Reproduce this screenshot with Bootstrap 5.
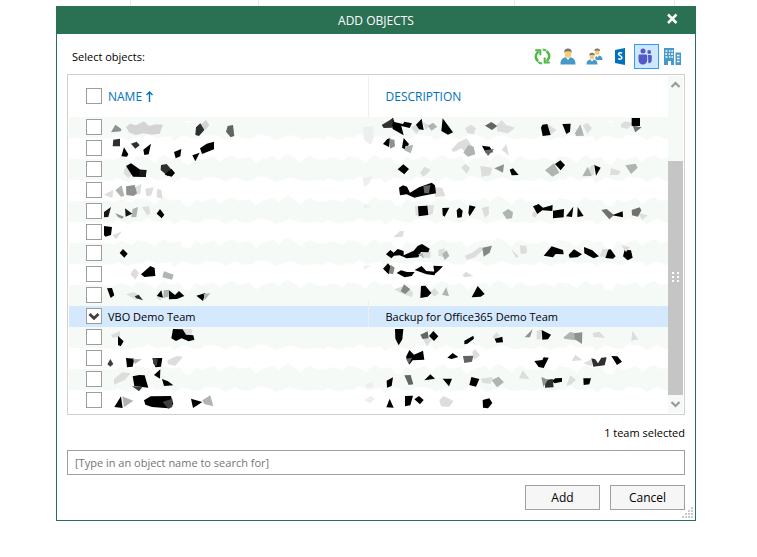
<!DOCTYPE html>
<html lang="en">
<head>
<meta charset="utf-8">
<meta name="viewport" content="width=device-width, initial-scale=1">
<title>Add Objects</title>
<link href="https://cdn.jsdelivr.net/npm/bootstrap@5.3.0/dist/css/bootstrap.min.css" rel="stylesheet">
<style>
  body { font: 11px/16px "Open Sans", "Noto Sans", sans-serif; color: #000; background: #fff; overflow-x: hidden; }
  .backdrop-grid { height: 6px; }
  .backdrop-grid span { border-right: 1px solid #eaeaea; }
  .g1 { width: 131px; } .g2 { width: 128px; } .g3 { width: 256px; } .g4 { width: 160px; }
  .dialog { margin: 0 61px 0 56px; border: 1px solid #2a7154; background: #fff; }
  .dialog-title { height: 27px; background: #2a7154; color: #fff; }
  .dialog-title h1 { font-size: 12px; line-height: 16px; font-weight: 400; }
  .close-btn { right: 17px; top: 6px; width: 12px; height: 12px; }
  .dialog-main { padding: 10px; }
  .prompt { padding-left: 5px; }
  .tools { gap: 1px; }
  .tool { width: 25px; height: 25px; border: 1px solid transparent; border-radius: 0; }
  .tool.active { background: #cce8fa; border-color: #3399ff; }
  .object-list { height: 341px; margin-top: 5px; border: 1px solid #d0d0d0; padding: 1px; }
  .objects { table-layout: fixed; border-collapse: collapse; }
  .objects th, .objects td { padding: 0 0 0 4px; font-weight: 400; vertical-align: middle; white-space: nowrap; }
  .objects th { height: 41px; font-size: 12px; color: #0072bc; }
  .objects td { height: 21px; padding-top: 3px; vertical-align: top; }
  .objects th:first-child, .objects td:first-child { width: 35px; padding-left: 17px; }
  .objects td:first-child { padding-top: 2px; }
  .objects th:first-child { padding-top: 12px; vertical-align: top; }
  .objects .col-name { width: 264px; }
  .objects .col-desc { padding-left: 17px; border-left: 1px solid #eeeeee; }
  .objects td.col-desc { border-left-color: transparent; }
  .objects tbody tr:nth-child(odd) { background: #f5faf7; }
  .objects tbody tr.picked { background: #d5e9fe; }
  .objects tr.picked td.col-desc { border-left-color: #eeeeee; }
  .tick { appearance: none; display: block; width: 16px; height: 16px; margin: 0; border: 1px solid #9d9d9d; background: #fff; }
  .tick:checked { background: #fff url("data:image/svg+xml,%3Csvg xmlns='http://www.w3.org/2000/svg' viewBox='0 0 14 14'%3E%3Cpath d='M2.500 5 7 9.300 11.500 5' fill='none' stroke='%23404040' stroke-width='2.800'/%3E%3C/svg%3E") center / 14px 14px no-repeat; }
  .smears { left: 0; top: 0; pointer-events: none; }
  .scroller { width: 15px; background: #f5faf7; }
  .scroller button { height: 17px; }
  .scroller button:last-child { height: 18px; }
  .track-top { height: 68px; }
  .thumb { background: #c5c5c5; }
  .count { margin-top: 10px; }
  .search { height: 25px; margin-top: 9px; padding: 0 7px; border: 1px solid #a0a0a0; border-radius: 0; font-size: 11px; line-height: 16px; color: #000; }
  .search::placeholder { color: #757575; opacity: 1; }
  .actions { margin-top: 10px; gap: 10px; }
  .action { width: 75px; height: 25px; padding: 0; border: 1px solid #a0a0a0; border-radius: 0; background: #f6f6f6; font-size: 12px; line-height: 16px; color: #000; }
  .grip { right: 2px; bottom: 2px; }
</style>
<script src="https://cdn.jsdelivr.net/npm/bootstrap@5.3.0/dist/js/bootstrap.bundle.min.js"></script>
</head>
<body>
<div class="backdrop-grid d-flex" aria-hidden="true"><span class="g1"></span><span class="g2"></span><span class="g3"></span><span class="g4"></span></div>
<main class="dialog position-relative">
  <header class="dialog-title position-relative d-flex align-items-center justify-content-center">
    <h1 class="m-0">ADD OBJECTS</h1>
    <button type="button" class="close-btn btn p-0 border-0 position-absolute d-flex" aria-label="Close">
      <svg width="12" height="12" viewBox="0 0 12 12"><path d="M2 1.500 10.500 10M10.500 1.500 2 10" stroke="#fff" stroke-width="2.500"/></svg>
    </button>
  </header>
  <div class="dialog-main">
    <div class="d-flex align-items-center justify-content-between">
      <span class="prompt">Select objects:</span>
      <div class="tools d-flex">
        <button type="button" class="tool btn p-0 d-flex align-items-center justify-content-center" aria-label="Refresh">
          <svg width="17" height="17" viewBox="0 0 17 17" fill="none" stroke="#52b848" stroke-width="2.500"><path d="M4.200 13.200C.8 10.500 1 6 4.600 3.400M12.500 3.300c3.700 2.800 3.500 7.200.2 10"/><path d="M8.200 15.400c-1.600 0-2.900-.6-4-1.500M8.700 1.400c1.300 0 2.500.5 3.500 1.300" stroke-width="2"/><path d="M1.200 2.200h5.100v5M15.800 14.600h-5.100v-5" stroke-width="2"/></svg>
        </button>
        <button type="button" class="tool btn p-0 d-flex align-items-center justify-content-center" aria-label="Users">
          <svg width="17" height="17" viewBox="0 0 17 17"><path d="M.5 16.500c0-5 2-6.500 5.200-7.200L8 12l2.300-2.700c3.200.7 5.200 2.200 5.200 7.200z" fill="#4799c9"/><ellipse cx="8" cy="5.200" rx="3.300" ry="4.500" fill="#f5cc78"/><path d="M4.200 4.400C4.200 1.500 6 .5 8 .5s3.800 1 3.800 3.900C9.500 3 6.500 3 4.200 4.400z" fill="#7d7568"/></svg>
        </button>
        <button type="button" class="tool btn p-0 d-flex align-items-center justify-content-center" aria-label="Groups">
          <svg width="17" height="17" viewBox="0 0 17 17"><path d="M9 9.500 10.500 8l1 1.500L13 7.500c2.200.4 3.500 1.500 3.500 4.500H10z" fill="#4799c9"/><ellipse cx="11.200" cy="3.800" rx="2.300" ry="3.200" fill="#f5cc78"/><path d="M8.500 3C8.500 1 9.700.4 11.200.4S14 1 14 3c-1.800-.8-3.700-.8-5.500 0z" fill="#7d7568"/><path d="M.5 16.500c0-3.500 1.300-4.700 3.700-5.100L6 13.400l1.800-2c2.400.4 3.700 1.600 3.700 5.100z" fill="#4799c9"/><ellipse cx="6" cy="8.200" rx="2.300" ry="3.200" fill="#f5cc78"/><path d="M3.300 7.400c0-2 1.200-2.600 2.700-2.600s2.800.6 2.800 2.600c-1.800-.8-3.700-.8-5.500 0z" fill="#7d7568"/></svg>
        </button>
        <button type="button" class="tool btn p-0 d-flex align-items-center justify-content-center" aria-label="SharePoint sites">
          <svg width="17" height="17" viewBox="0 0 17 17"><path d="M3 2 13 0v17L3 15z" fill="#0072bc"/><path d="M10.200 5.200C8.500 4.300 6.500 4.500 6.500 6s3.400 1.700 3.400 3.500-2.100 2.200-3.700 1.100" stroke="#fff" stroke-width="1.500" fill="none"/></svg>
        </button>
        <button type="button" class="tool active btn p-0 d-flex align-items-center justify-content-center" aria-label="Teams" aria-pressed="true">
          <svg width="17" height="17" viewBox="0 0 17 17" fill="#5558c8"><circle cx="5" cy="3" r="2.500"/><circle cx="11.200" cy="4" r="1.900"/><path d="M1.500 6.500H8q1.200 0 1.200 1.200V12c0 2.700-1.800 4.500-4.300 4.500S.5 14.700.5 12V7.700q0-1.200 1-1.200zM10 7h2.700q1.100 0 1.100 1.100V12c0 2.200-1.300 3.500-3.300 3.200Q10.200 14 10.200 12z"/></svg>
        </button>
        <button type="button" class="tool btn p-0 d-flex align-items-center justify-content-center" aria-label="Organizations">
          <svg width="17" height="17" viewBox="0 0 17 17"><path d="M0 0h10v17H7v-4H4v4H0zM11.500 4.500H17V17h-5.500z" fill="#4799c9"/><path d="M1.500 3h2m1.500 0h1.500m1 0H9M1 6h2m1.500 0H6m1 0h2M1.500 9h2m1.500 0h1.500m1 0H9M13 7.500h2.500m-2.500 3h2.500m-2.500 3h2.500" stroke="#fff" stroke-width="1.300"/></svg>
        </button>
      </div>
    </div>

    <div class="object-list d-flex position-relative">
      <div class="flex-grow-1">
        <table class="objects w-100">
          <thead>
            <tr>
              <th scope="col"><input type="checkbox" class="tick" aria-label="Select all"></th>
              <th scope="col" class="col-name">NAME <svg width="9" height="12" viewBox="0 0 9 12"><path d="M4.500 11V1M1.500 4l3-3 3 3" fill="none" stroke="#0072bc" stroke-width="1.400"/></svg></th>
              <th scope="col" class="col-desc">DESCRIPTION</th>
            </tr>
          </thead>
          <tbody>
            <tr><td><input type="checkbox" class="tick" aria-label="Object 1"></td><td></td><td class="col-desc"></td></tr>
            <tr><td><input type="checkbox" class="tick" aria-label="Object 2"></td><td></td><td class="col-desc"></td></tr>
            <tr><td><input type="checkbox" class="tick" aria-label="Object 3"></td><td></td><td class="col-desc"></td></tr>
            <tr><td><input type="checkbox" class="tick" aria-label="Object 4"></td><td></td><td class="col-desc"></td></tr>
            <tr><td><input type="checkbox" class="tick" aria-label="Object 5"></td><td></td><td class="col-desc"></td></tr>
            <tr><td><input type="checkbox" class="tick" aria-label="Object 6"></td><td></td><td class="col-desc"></td></tr>
            <tr><td><input type="checkbox" class="tick" aria-label="Object 7"></td><td></td><td class="col-desc"></td></tr>
            <tr><td><input type="checkbox" class="tick" aria-label="Object 8"></td><td></td><td class="col-desc"></td></tr>
            <tr><td><input type="checkbox" class="tick" aria-label="Object 9"></td><td></td><td class="col-desc"></td></tr>
            <tr class="picked"><td><input type="checkbox" class="tick" id="vbo" checked></td><td><label for="vbo">VBO Demo Team</label></td><td class="col-desc">Backup for Office365 Demo Team</td></tr>
            <tr><td><input type="checkbox" class="tick" aria-label="Object 11"></td><td></td><td class="col-desc"></td></tr>
            <tr><td><input type="checkbox" class="tick" aria-label="Object 12"></td><td></td><td class="col-desc"></td></tr>
            <tr><td><input type="checkbox" class="tick" aria-label="Object 13"></td><td></td><td class="col-desc"></td></tr>
            <tr><td><input type="checkbox" class="tick" aria-label="Object 14"></td><td></td><td class="col-desc"></td></tr>
          </tbody>
        </table>
      </div>
      <div class="scroller d-flex flex-column flex-shrink-0">
        <button type="button" class="btn p-0 border-0 d-flex align-items-center justify-content-center" aria-label="Scroll up"><svg width="11" height="8" viewBox="0 0 11 8"><path d="M1.500 6 5.500 2l4 4" fill="none" stroke="#999" stroke-width="2.200"/></svg></button>
        <div class="track-top"></div>
        <div class="thumb flex-grow-1 d-flex align-items-center justify-content-center"><svg width="7" height="12" viewBox="0 0 7 12"><path d="M0 1h7M0 5h7M0 9h7" stroke="#fff" stroke-width="2" stroke-dasharray="2 3"/></svg></div>
        <button type="button" class="btn p-0 border-0 d-flex align-items-center justify-content-center" aria-label="Scroll down"><svg width="11" height="8" viewBox="0 0 11 8"><path d="M1.500 2 5.500 6l4-4" fill="none" stroke="#999" stroke-width="2.200"/></svg></button>
      </div>

      <!-- Redaction smears laid over the private rows -->
      <svg class="smears position-absolute" width="616" height="339" viewBox="68 75 616 339" aria-hidden="true">
        <defs>
          <pattern id="ragged" x="104" y="127" width="211" height="42" patternUnits="userSpaceOnUse">
            <rect width="211" height="42" fill="#f5faf7"/>
            <path fill="#fff" d="M0 11 9 12 13 9 24 13 33 10 38 11 44 7 52 11 66 9 70 14 79 8 88 11 96 12 101 8 115 9 121 13 131 8 140 12 149 11 154 7 165 9 171 13 187 8 198 12 211 11V32L206 29 201 31 197 36 191 31 184 27 179 29 175 34 170 29 158 32 152 37 146 30 134 32 128 28 121 31 116 35 110 29 98 33 91 30 86 38 79 36 76 30 66 32 60 28 55 31 51 36 44 31 33 29 28 34 18 30 9 33 0 32z"/>
          </pattern>
        </defs>
        <path fill="url(#ragged)" d="M104 117h564v189H104zM104 328h564v83H104z"/>
        <path fill="#f5faf7" d="M104 117h564v4H104zM104 294h564v12H104zM104 328h564v6H104z"/>
        <path fill="#fff" d="M104 400h564v11H104z"/>
        <path fill="#eee" d="M363 127l10-1 1 10-3 9-7-5zM363 178l9-2-3 8-5 3zM364 204l8 3-8 1zM364 266l7-1-7 5zM366 384l7-3v7h-7zM364 400l7-4 4 3-5 4z"/>
        <path d="M368.500 301v5M368.500 328v1" stroke="#eee"/>

        <g transform="translate(60 110) scale(.333333)">
          <path fill="#d4d4d4" d="M198 51l12-10 18 5 24-12 15 14 20-5 22 1-10 27-24 3-25-4-22 5-20-7zM422 45l16-15 10 15-11 15-12-6z"/>
          <path fill="#ddd" d="M192 177l12-6 14 20-13 14-13-14zM132 254l28-15-3 25zM225 232l19-11-3 30-17 4zM256 236l25-4-8 25-14 1zM291 237l13 2 4 27-18-4zM246 291l21-2 4 22-10 5z"/>
          <path fill="#8d918f" d="M153 67l13-23 18 13-1 7zM198 229l26-4 7 25-10 8-22-3zM166 310l26 10-6 6-12-5z"/>
          <path fill="#aeb5b1" d="M166 241l19-15 8 32-10 2zM218 297l16-6-5 30-15 1z"/>
          <path fill="#2d302e" d="M160 89l20-3v23h-22zM213 101l17-6 9 11-13 10zM408 52l13-12 12 20-16 18-11-3zM303 165l17-3 18 21-14 16-22-19z"/>
          <path fill="#626562" d="M503 48l16-3 4 33-11 4-14-17z"/>
          <path d="M184 139l8-27 13 21-4 7zM250 119l23-18-7 32-13 2zM342 126l22-9-3 22-14 6zM397 136l22-8-13 26zM420 115l20-14 22-6v23l-36 14zM198 168l15-8 28 19 19 1-3 21-38-1zM314 194l20-18 11 13-10 11zM290 311l10-14 13 17-8 11z"/>
          <path d="M238 179l20 1v21h-19zM132 306l21-15-8 30-13 1zM195 295l22 16-20 9z" fill="#171917"/>
        </g>
        <g transform="translate(60 210) scale(.333333)">
          <path fill="#ddd" d="M158 76l28-12-18 24zM211 193l12-18 14 13-10 21zM198 253l24-6 18 10-11 13zM290 264l17-14-5 22z"/>
          <path d="M132 48l24 3-3 24-17 5-4-5zM179 129l10-12 14 14-10 12zM243 193l28-25 13 6 2 24-33 3zM141 235l15-1 7 22-11 8zM290 258l14-17 5 22zM326 240l19 15 12-12 16 15-22 9-24 1zM409 257l27-8-7 24z"/>
          <path d="M312 184l29 10-5 15-29-7zM311 241l16-2-2 21-15 4zM431 252l20-3-17 22z" fill="#aeb5b1"/>
          <path d="M224 259l12-5 13 17-20-6z" fill="#292c2a"/>
        </g>
        <g transform="translate(60 300) scale(.333333)">
          <path fill="#ddd" d="M153 105l27-12v17l-22 4zM366 87l31 1-3 21-23-2zM162 237l25-20 25 3-18 20-32 14zM322 181l28-13 19 2-23 27-22-4z"/>
          <path d="M174 108l17 16-9 15-8-4zM339 87l29 1 10 16 22 2 3 13-17 5-21-9-17 8-14-8zM198 174l25 2-5 24-17 2zM277 175l30-1-4 26-17 2zM218 229l20-4 16 1 11 37-42-5zM282 225l19-17-1 28zM306 237l18 7 16 12-28 2zM163 321l20-32 5 35zM252 301l20-12 61-1 7 25-15 12-49-4-20-7zM393 296l34 10-28 18z"/>
          <path fill="#3c403d" d="M142 193l9-16 9 15-9 8zM278 176l15 2-3 21-10-7zM216 259l32 1-11 14zM315 303l22-7v25l-12 5-17-19z"/>
          <path d="M187 289l33 13-28 20zM427 301l24-15 9 33-27-7zM219 177l26 1-20 14z" fill="#aeb5b1"/>
        </g>
        <g transform="translate(360 110) scale(.333333)">
          <path fill="#ddd" d="M153 52l18-10 8 18-10 12zM188 36l23 11-15 13zM315 55l18-11 15 11-7 18-18-3zM411 44l14-14 13 15 27 8-21 17-33-6zM274 119l19-21 26-13 18 24 6 27-22-2-16-19-25 12zM425 119l14-16 8 34zM180 190l13-20 20 10-23 20zM304 173l12-12 14 13-10 17zM361 168l36 5-6 22-26 6zM220 232l27 1 9 25-30 3zM165 288l57-3-4 28-51 4zM365 294l21-5 1 24-12 10z"/>
          <path d="M92 29l7-6 4 13 26 6 4-7 23 5-7 14-25-6 7 28-33-19zM168 44l17-18 6 34-14-2zM248 25l31 42-15 7-20-11zM69 102l13-15 9-2-4 26zM126 113l5-29 16 18-10 17zM366 107l23 3 10 17-22 1zM113 178l17-15 17 14-14 16zM449 179l10-4 17 20-21 1zM117 233l12-7 12 4 9 18 27-16 38-14 10 8 3 24-43 8-22 5-23-10-20 3zM174 289l28-2 3 28-29 4zM247 294l21-1-14 27-6-4zM290 301l8-8 10 9-3 20-13 1zM328 286l19 4-18 29-4-10z"/>
          <path fill="#303330" d="M65 45l20-12 14-8-2 28-26 1z"/>
          <path fill="#626562" d="M190 228l21-3-4 25-14 0zM375 47l19-11 18 12-16 12zM373 121l29-4-18 21z"/>
          <path fill="#8d918f" d="M88 87l15 2 2 20-15 7zM403 175l29-12-3 25z"/>
          <path fill="#aeb5b1" d="M136 108l24-3-8 25-19-9zM204 47l15-9 13 12-18 12zM325 105l16 5 5 23-22 7-14-12zM427 308l18-11 14 10-3 18-16 2z"/>
        </g>
        <g transform="translate(520 110) scale(.333333)">
          <path fill="#ddd" d="M84 43l25 17-18 15zM188 46l14-8 14 16-14 17zM302 43l14-9 23 5-16 18-20-5zM211 169l14-6-4 32-22 4zM273 174l29 10-7 10-25 1zM38 307l18-4-9 20-11-6zM354 309l29 7-16 14z"/>
          <path d="M63 53l4-9 15-2 10 33-24 3zM127 42l25-1-2 24-11 7zM335 24h25v24h-25zM105 162l16-11 14 14-13 16zM223 165l19 8-14 24zM39 289l17-7 13 11 29-8-1 18-30-2-15 11zM99 302l33-5-1 25-32 3zM138 319l22-29-4 31zM173 291l18 27-19 3zM276 316l32-12 1 18z"/>
          <path d="M165 69l16-26 11 34-24 1zM75 181l27-21 16 28-21 12zM187 199l16-29 12 28zM316 166l31-5 6 12-20 19z" fill="#aeb5b1"/>
          <path d="M338 47l27 5-19 15zM244 300l16-3 22 18-14 13zM335 300l24-8 5 9-10 19-18-4z" fill="#6f716f"/>
        </g>
        <g transform="translate(360 205) scale(.333333)">
          <path fill="#ddd" d="M100 97l20-19 12 1-4 16zM188 141l25-1-2 18-25 1zM235 134l20-4-4 27-16-5zM315 152l24-10 21-17 12 7-27 25-25 8zM453 132l23 22-7 6zM482 127l14-7 6 22-18 6zM307 211l11-11 22 13-26 4zM101 253l33-11 25 20-2 15-29-10zM210 262l14-13 13 16-15 10z"/>
          <path d="M78 148l13-13 10 8 12-11 18 6v13l30-14 12-14 13-6 23 14-4 11-22-1-8 16-35 3-21-9-17 1-8 8zM69 191l15-16 12 15-10 18zM110 204l13-8 18 5 23 0-9 12-21 4zM164 195l21-12 14 15 30 2-6 11-23-3zM220 182l29 2-13 13-12 10zM183 243l13-1 18 22-11 11-22 4zM335 277l18-34 21 24-12 8z"/>
          <path fill="#858986" d="M92 179l12 9-5 20-13-3zM122 259l10-21 19 15-15 14zM367 128l29-6-7 21-18 12z"/>
          <path fill="#aeb5b1" d="M247 147l13-11 8 17-14 12zM246 269l13-23 8 28zM174 148l14-5 3 16z"/>
        </g>
        <g transform="translate(520 205) scale(.333333)">
          <path d="M71 152l24-28 34 11 2 13-24-1-8 10zM146 149l16-16 24 15-14 9-23 1zM192 126l25 10 20 18-16 6-28-15zM256 136l16-3 15 21-8 7-23-2zM309 154l5-20 19 2 5 22-15 8z"/>
          <path fill="#ddd" d="M0 120l21 6-4 21-16-4zM238 154l10-22 17 1-8 24zM303 121l27 5-12 15z"/>
        </g>
        <g transform="translate(360 300) scale(.333333)">
          <path fill="#ddd" d="M188 116h29l-16 23zM397 111l13-15 9 11-14 11zM337 155l8-7 15 18-18 14zM362 236l35-5-4 20-25-2zM477 235l11-24 21 27zM238 301l13-13 30 15-14 18-24-2z"/>
          <path d="M105 87h25l-3 31-11 18-10-20zM207 108l13-15 15 16-13 14zM313 122l27-15 2 9-20 15-9 2zM404 116l23-6 2 17-20 1zM138 171l10-21 14 14 27-12 4 27-35 2-10 13zM262 173l16-14 17 12-20 6zM80 242l19-10-4 26-14 5zM193 241l18-18 14 13zM248 236l28 0-9 23zM328 255l6-24 24 6-10 23zM79 322l10-26 12 27zM135 288l24-1-8 29-16 3zM163 298l14-10 14 12-11 13zM368 300l20-5 9 14-13 16-15-2z"/>
          <path fill="#626562" d="M181 104l22-10 3 21-18 2zM138 176l18-3-9 20zM309 168l31-1-4 18-23 4zM133 226l19-1 8 28-14 2z"/>
          <path fill="#aeb5b1" d="M395 240l21-10 16 17-21 15z"/>
        </g>
        <g transform="translate(520 300) scale(.333333)">
          <path fill="#ddd" d="M50 93l15-5-1 28-14 3zM218 99l20-4 18 19-36-3zM337 92l18 26-21 4zM155 183l11-19 21 17zM190 190l25-12 1 21zM139 257l12-31 17 14-13 12z"/>
          <path d="M65 90l28 14-9 14-17 1zM43 183l24-3 4-8 15 1-15 31-15-3zM274 168l18 1 14 16-15 10zM95 243l11-8 20-1v11l-22 5zM190 235l23 0-5 18-17 2z"/>
          <path fill="#2d302e" d="M214 175l12 3 8 12 10-17 16-1-6 24-34 4zM76 240l22-3 3 25-26 1z"/>
          <path fill="#8d918f" d="M14 112l24-25-8 25zM160 100l27-3-1 35-17-11-10-4zM64 231l20 8-14 22z"/>
          <path fill="#aeb5b1" d="M131 112l19-16 12 2 3 23-33-5z"/>
        </g>
      </svg>
    </div>

    <div class="count text-end">1 team selected</div>
    <input type="text" class="search form-control" placeholder="[Type in an object name to search for]" aria-label="Search for an object">
    <div class="actions d-flex justify-content-end">
      <button type="button" class="action btn">Add</button>
      <button type="button" class="action btn">Cancel</button>
    </div>
  </div>
  <svg class="grip position-absolute" width="11" height="11" viewBox="0 0 11 11" aria-hidden="true"><path d="M9 0h2v2H9zM6 3h2v2H6zM9 3h2v2H9zM3 6h2v2H3zM6 6h2v2H6zM9 6h2v2H9zM0 9h2v2H0zM3 9h2v2H3zM6 9h2v2H6zM9 9h2v2H9z" fill="#c5ccd6"/></svg>
</main>
</body>
</html>
